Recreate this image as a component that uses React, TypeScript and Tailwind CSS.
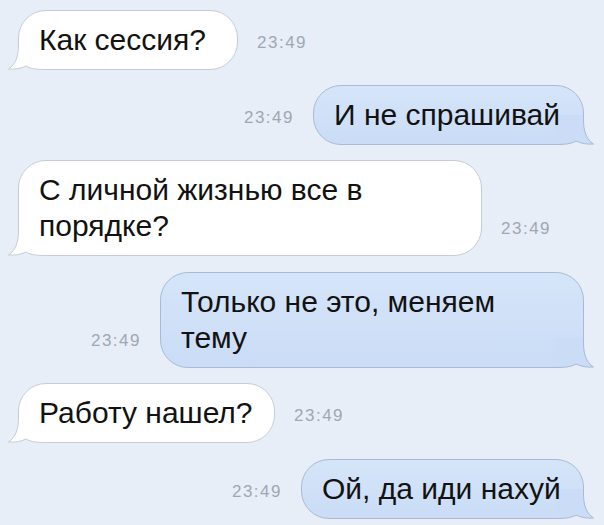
import type { ReactNode } from "react";

type Side = "in" | "out";

interface MessageProps {
  side: Side;
  width: string;
  time: string;
  className?: string;
  children: ReactNode;
}

function Tail({ side }: { side: Side }) {
  const fill = side === "in" ? "#ffffff" : "#cadcf6";
  const stroke = side === "in" ? "#c6ccd6" : "#a9bad2";
  const outline =
    "M 11.5 0 L 11.5 4 C 11.5 16, 9 24, 1.5 29 C 8 29.5, 14 28.5, 19 26 C 24 29, 30 29.5, 40 29.5";
  return (
    <svg
      width="40"
      height="30"
      viewBox="0 0 40 30"
      className={
        side === "in"
          ? "absolute left-[-12px] bottom-[-1px]"
          : "absolute right-[-12px] bottom-[-1px] -scale-x-100"
      }
    >
      <path d={`${outline} L 40 0 Z`} fill={fill} />
      <path d={outline} fill="none" stroke={stroke} strokeWidth="1" />
    </svg>
  );
}

function Message({ side, width, time, className, children }: MessageProps) {
  const bubble = (
    <div
      className={
        side === "in"
          ? `relative rounded-[28px] border border-[#c6ccd6] bg-white px-5 py-[11px] ${width}`
          : `relative rounded-[28px] border border-[#a9bad2] bg-gradient-to-b from-[#d5e5f9] to-[#cadcf6] px-5 py-[11px] ${width}`
      }
    >
      <Tail side={side} />
      <p className="relative text-[30px] leading-[36px] text-[#121212]">
        {children}
      </p>
    </div>
  );

  const stamp = (
    <span className="mb-[9px] text-[17px] leading-[36px] tracking-[1.5px] text-[#a0a7b2]">
      {time}
    </span>
  );

  return side === "in" ? (
    <div className={`flex items-end gap-[19px] pl-[18px] ${className ?? ""}`}>
      {bubble}
      {stamp}
    </div>
  ) : (
    <div
      className={`flex items-end justify-end gap-[19px] pr-[20px] ${className ?? ""}`}
    >
      {stamp}
      {bubble}
    </div>
  );
}

export default function App() {
  return (
    <div
      className="h-[525px] w-[604px] overflow-hidden bg-[#e8eef7] pt-[10px]"
      style={{ fontFamily: '"Liberation Sans", Arial, sans-serif' }}
    >
      <Message side="in" width="w-[220px]" time="23:49">
        Как сессия?
      </Message>
      <Message side="out" width="w-[271px]" time="23:49" className="mt-[15px]">
        И не спрашивай
      </Message>
      <Message side="in" width="w-[464px]" time="23:49" className="mt-[15px]">
        С личной жизнью все в<br />
        порядке?
      </Message>
      <Message side="out" width="w-[424px]" time="23:49" className="mt-[16px]">
        Только не это, меняем
        <br />
        тему
      </Message>
      <Message side="in" width="w-[257px]" time="23:49" className="mt-[15px]">
        Работу нашел?
      </Message>
      <Message side="out" width="w-[283px]" time="23:49" className="mt-[16px]">
        Ой, да иди нахуй
      </Message>
    </div>
  );
}
